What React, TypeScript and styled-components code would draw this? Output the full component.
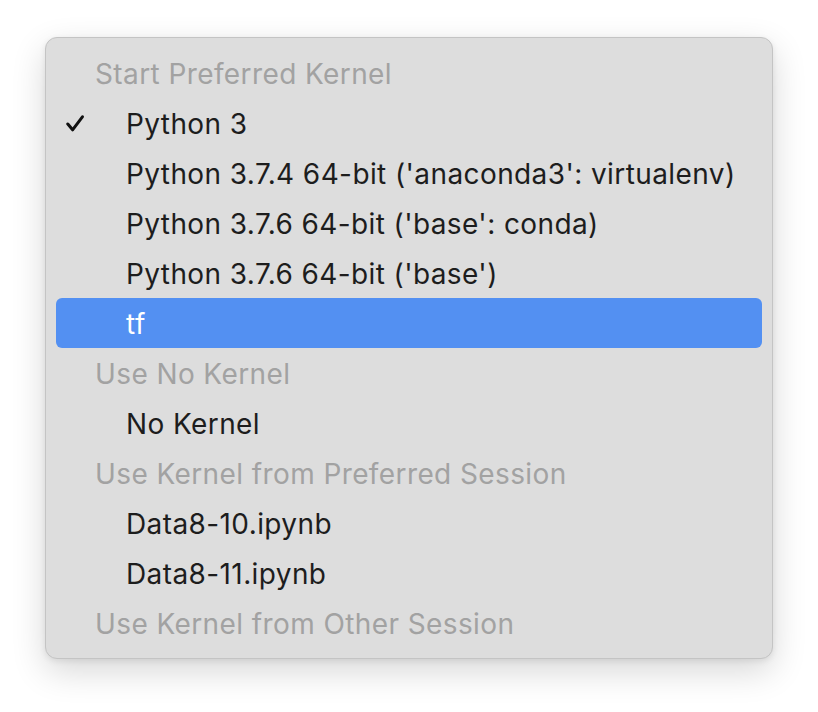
import { FC } from "react";
import styled, { createGlobalStyle } from "styled-components";

const GlobalStyle = createGlobalStyle`
  html, body {
    margin: 0;
    padding: 0;
    background: #ffffff;
    font-family: Inter, "Liberation Sans", sans-serif;
  }
`;

const Page = styled.div`
  width: 818px;
  height: 712px;
  padding: 37px 0 0 45px;
  box-sizing: border-box;
`;

const Menu = styled.div`
  width: 728px;
  box-sizing: border-box;
  padding: 10px;
  background-color: #dddddd;
  border: 1px solid #c4c4c4;
  border-radius: 12px;
  box-shadow: 0 12px 34px rgba(0, 0, 0, 0.16), 0 2px 6px rgba(0, 0, 0, 0.08);
  display: flex;
  flex-direction: column;
`;

const Header = styled.div`
  height: 50px;
  box-sizing: border-box;
  padding-top: 2px;
  display: flex;
  align-items: center;
  padding-left: 39px;
  font-size: 28px;
  color: #a2a2a2;
  letter-spacing: 0.4px;
`;

const Item = styled.div<{ $active?: boolean }>`
  position: relative;
  height: 50px;
  box-sizing: border-box;
  padding-top: 2px;
  display: flex;
  align-items: center;
  padding-left: 70px;
  font-size: 28px;
  letter-spacing: 0.4px;
  border-radius: 6px;
  color: ${(props) => (props.$active ? "#ffffff" : "#1d1d1d")};
  background-color: ${(props) => (props.$active ? "#5390f2" : "transparent")};
`;

const Check = styled.svg`
  position: absolute;
  left: 10px;
  top: 17px;
  width: 18px;
  height: 17px;
`;

type Row = { kind: "header" | "item"; text: string; checked?: boolean; active?: boolean };

const rows: Row[] = [
  { kind: "header", text: "Start Preferred Kernel" },
  { kind: "item", text: "Python 3", checked: true },
  { kind: "item", text: "Python 3.7.4 64-bit ('anaconda3': virtualenv)" },
  { kind: "item", text: "Python 3.7.6 64-bit ('base': conda)" },
  { kind: "item", text: "Python 3.7.6 64-bit ('base')" },
  { kind: "item", text: "tf", active: true },
  { kind: "header", text: "Use No Kernel" },
  { kind: "item", text: "No Kernel" },
  { kind: "header", text: "Use Kernel from Preferred Session" },
  { kind: "item", text: "Data8-10.ipynb" },
  { kind: "item", text: "Data8-11.ipynb" },
  { kind: "header", text: "Use Kernel from Other Session" },
];

const App: FC = () => {
  return (
    <Page>
      <GlobalStyle />
      <Menu>
        {rows.map((row) =>
          row.kind === "header" ? (
            <Header key={row.text}>{row.text}</Header>
          ) : (
            <Item key={row.text} $active={row.active}>
              {row.checked && (
                <Check viewBox="0 0 18 17">
                  <path
                    d="M1.8 9 L6.6 14.8 L16.4 1.8"
                    fill="none"
                    stroke="#111111"
                    strokeWidth="3"
                    strokeLinecap="round"
                    strokeLinejoin="round"
                  />
                </Check>
              )}
              {row.text}
            </Item>
          )
        )}
      </Menu>
    </Page>
  );
};

export default App;
